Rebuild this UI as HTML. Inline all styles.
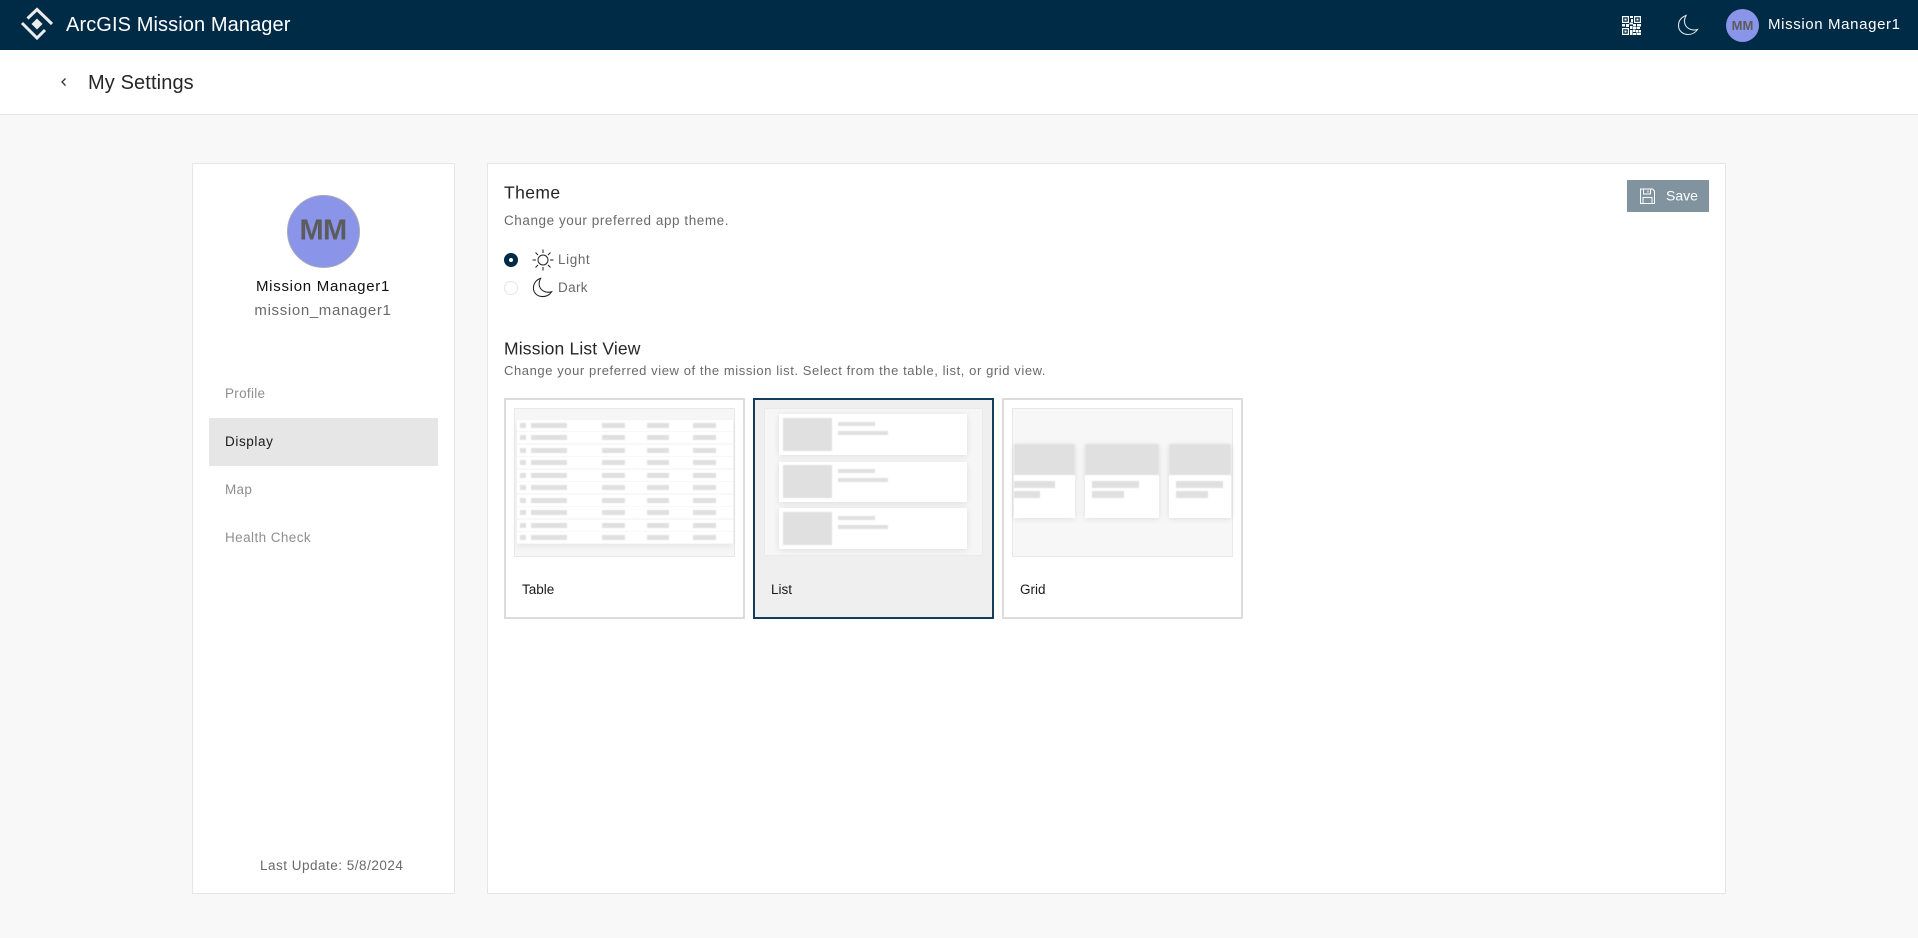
<!DOCTYPE html>
<html><head><meta charset="utf-8"><title>My Settings</title>
<style>
html,body{margin:0;padding:0;width:1918px;height:938px;overflow:hidden;background:#f8f8f8;font-family:"Liberation Sans",sans-serif}
.a{position:absolute}
.t{position:absolute;white-space:nowrap;transform:translateY(-50%);line-height:1.2}
.bar{position:absolute;background:#e0e0e0;filter:blur(.6px)}
.shadow{box-shadow:0 1px 6px rgba(0,0,0,.1)}
.n{font-size:13.5px;letter-spacing:.3px}
.r{position:absolute;left:517px;width:216px;height:11px;background:#fff}
.r i{position:absolute;top:3px;height:5px;background:#e0e0e0;filter:blur(.6px)}
.c1{left:3px;width:6px}.c2{left:14px;width:36px}.c3{left:85px;width:23px}.c4{left:130px;width:22px}.c5{left:176px;width:23px}
</style></head><body>
<div class="a" style="left:0;top:0;width:1918px;height:50px;background:#002b47"></div>
<svg class="a" style="left:14px;top:2px" width="46" height="46" viewBox="14 2 46 46" fill="none" stroke="#ececec" stroke-width="3">
<path d="M27.500 18.500 L37 9.500 L52 24"/><path d="M22 23 L37 38 L45 30"/><path d="M37 18.500 L42.500 24 L37 29.500 L31.500 24Z" fill="#ececec" stroke="none"/></svg>
<div class="t" style="left:66px;top:25px;font-size:20px;color:#fff;letter-spacing:.1px">ArcGIS Mission Manager</div>
<svg class="a" style="left:1622px;top:16px" width="19" height="19" viewBox="0 0 19 19" fill="#fff">
<path fill-rule="evenodd" d="M0 0h7v7H0zM1.200 1.200v4.600h4.600v-4.600zM12 0h7v7h-7zM13.200 1.200v4.600h4.600v-4.600zM0 12h7v7H0zM1.200 13.200v4.600h4.600v-4.600z"/>
<path d="M2.500 2.500h2v2h-2zM14.500 2.500h2v2h-2zM2.500 14.500h2v2h-2zM8 0h3v2H8zM9 3h2v3H9zM7.500 6.500h3.500v2H7.500zM0 8h3v2.500H0zM4 8h3v3H4zM11 8h3v2.500h-3zM15 8h4v2.500h-4zM8 10h2.500v3H8zM11 11h3.500v2H11zM15 11h3v2h-3zM8 14h2.500v5H8zM11 13.500h2.500v2.500H11zM14 14h2.500v2.500H14zM17 14h2v2.500h-2zM11 17h3.500v2H11zM15 17h4v2h-4z"/></svg>
<svg class="a" style="left:1677px;top:14px" width="22" height="22" viewBox="0 0 22 22" fill="none" stroke="#dfe5e9" stroke-width="1.100">
<path d="M9 1.500C4.500 3 1.500 6.700 1.500 11.500C1.500 17 6 20.500 11 20.500C15 20.500 18.500 18.500 20.500 15.500C14 17.500 8 13.500 7.500 8C7.300 5.500 8 3.500 9 1.500Z"/></svg>
<div class="a" style="left:1726px;top:9px;width:33px;height:33px;border-radius:50%;background:#8a94e8"></div>
<div class="t" style="left:1726px;width:33px;text-align:center;top:26px;font-size:13px;font-weight:bold;color:#5c5c5c">MM</div>
<div class="t" style="left:1768px;top:25px;font-size:15px;color:#fff;letter-spacing:.63px">Mission Manager1</div>

<div class="a" style="left:0;top:50px;width:1918px;height:64px;background:#fff;border-bottom:1px solid #e6e6e6"></div>
<svg class="a" style="left:58px;top:76px" width="12" height="12" viewBox="0 0 12 12" fill="none" stroke="#333" stroke-width="1.300"><path d="M7.500 2.500L4 6l3.500 3.500"/></svg>
<div class="t" style="left:88px;top:83px;font-size:20px;color:#262626;letter-spacing:.12px">My Settings</div>

<div class="a" style="left:192px;top:163px;width:261px;height:729px;background:#fff;border:1px solid #e6e6e6"></div>
<div class="a" style="left:287px;top:195px;width:71px;height:71px;border-radius:50%;background:#8a94e8;border:.5px solid #a9a9b5"></div>
<div class="t" style="left:287px;width:72px;text-align:center;top:231px;font-size:29px;font-weight:bold;color:#5c5c5c;letter-spacing:-.6px">MM</div>
<div class="t" style="left:192px;width:262px;text-align:center;top:286.500px;font-size:15px;color:#111;letter-spacing:.72px">Mission Manager1</div>
<div class="t" style="left:192px;width:262px;text-align:center;top:310.500px;font-size:15px;color:#6a6a6a;letter-spacing:.65px">mission_manager1</div>
<div class="a" style="left:209px;top:418px;width:229px;height:48px;background:#e6e6e6"></div>
<div class="t n" style="left:225px;top:393.500px;color:#8f8f8f">Profile</div>
<div class="t n" style="left:225px;top:441.500px;color:#1a1a1a;letter-spacing:.6px">Display</div>
<div class="t n" style="left:225px;top:489.500px;color:#8f8f8f">Map</div>
<div class="t n" style="left:225px;top:537.500px;color:#8f8f8f;letter-spacing:.42px">Health Check</div>
<div class="t" style="left:260px;top:866px;font-size:13.500px;color:#6a6a6a;letter-spacing:.5px">Last Update: 5/8/2024</div>

<div class="a" style="left:487px;top:163px;width:1237px;height:729px;background:#fff;border:1px solid #e6e6e6"></div>
<div class="a" style="left:1627px;top:180px;width:82px;height:32px;background:#80939f"></div>
<svg class="a" style="left:1639px;top:187px" width="17" height="18" viewBox="0 0 17 18" fill="none" stroke="#fff" stroke-width="1"><path d="M1.500 2h12l2 2v12.500h-14zM4.500 2v5h7V2M9 3.500v2M4 16.500V10.500h9v6"/></svg>
<div class="t" style="left:1666px;top:196px;font-size:14px;color:#fff">Save</div>

<div class="t" style="left:504px;top:193px;font-size:17.500px;color:#262626;letter-spacing:.4px">Theme</div>
<div class="t" style="left:504px;top:221px;font-size:13.500px;color:#6a6a6a;letter-spacing:.56px">Change your preferred app theme.</div>
<div class="a" style="left:504px;top:253px;width:14px;height:14px;border-radius:50%;background:#002b47"></div>
<div class="a" style="left:509px;top:258px;width:4px;height:4px;border-radius:50%;background:#fff"></div>
<div class="a" style="left:504px;top:281px;width:12px;height:12px;border-radius:50%;background:#fff;border:1px solid #e3e3e3"></div>
<svg class="a" style="left:532px;top:249px" width="22" height="22" viewBox="0 0 22 22" fill="none" stroke="#222" stroke-width="1">
<circle cx="11" cy="11" r="5"/><path d="M11 .5v3.500M11 18v3.500M.5 11H4M18 11h3.500M3.500 3.500L6 6M16 16l2.500 2.500M3.500 18.500L6 16M16 6l2.500-2.500"/></svg>
<svg class="a" style="left:532px;top:277px" width="21" height="21" viewBox="0 0 22 22" fill="none" stroke="#222" stroke-width="1.100">
<path d="M9 1.500C4.500 3 1.500 6.700 1.500 11.500C1.500 17 6 20.500 11 20.500C15 20.500 18.500 18.500 20.500 15.500C14 17.500 8 13.500 7.500 8C7.300 5.500 8 3.500 9 1.500Z"/></svg>
<div class="t" style="left:558px;top:260px;font-size:13.500px;color:#6a6a6a;letter-spacing:.6px">Light</div>
<div class="t" style="left:558px;top:288px;font-size:13.500px;color:#6a6a6a;letter-spacing:.35px">Dark</div>

<div class="t" style="left:504px;top:349px;font-size:17.500px;color:#262626;letter-spacing:.16px">Mission List View</div>
<div class="t" style="left:504px;top:371px;font-size:13px;color:#6a6a6a;letter-spacing:.58px">Change your preferred view of the mission list. Select from the table, list, or grid view.</div>

<!-- Table card -->
<div class="a" style="left:504px;top:398px;width:237px;height:217px;background:#fff;border:2px solid #dcdcdc"></div>
<div class="a" style="left:514px;top:408px;width:219px;height:147px;background:#f6f6f6;border:1px solid #e8e8e8"></div>
<div class="a" style="left:517px;top:420px;width:216px;height:124px;background:#f8f8f8;box-shadow:0 3px 6px rgba(0,0,0,.06)"></div>
<div class="r" style="top:420px"><i class="c1"></i><i class="c2"></i><i class="c3"></i><i class="c4"></i><i class="c5"></i></div>
<div class="r" style="top:432px"><i class="c1"></i><i class="c2"></i><i class="c3"></i><i class="c4"></i><i class="c5"></i></div>
<div class="r" style="top:445px"><i class="c1"></i><i class="c2"></i><i class="c3"></i><i class="c4"></i><i class="c5"></i></div>
<div class="r" style="top:457px"><i class="c1"></i><i class="c2"></i><i class="c3"></i><i class="c4"></i><i class="c5"></i></div>
<div class="r" style="top:470px"><i class="c1"></i><i class="c2"></i><i class="c3"></i><i class="c4"></i><i class="c5"></i></div>
<div class="r" style="top:482px"><i class="c1"></i><i class="c2"></i><i class="c3"></i><i class="c4"></i><i class="c5"></i></div>
<div class="r" style="top:495px"><i class="c1"></i><i class="c2"></i><i class="c3"></i><i class="c4"></i><i class="c5"></i></div>
<div class="r" style="top:507px"><i class="c1"></i><i class="c2"></i><i class="c3"></i><i class="c4"></i><i class="c5"></i></div>
<div class="r" style="top:520px"><i class="c1"></i><i class="c2"></i><i class="c3"></i><i class="c4"></i><i class="c5"></i></div>
<div class="r" style="top:532px"><i class="c1"></i><i class="c2"></i><i class="c3"></i><i class="c4"></i><i class="c5"></i></div>
<div class="t" style="left:522px;top:590px;font-size:13.500px;color:#1a1a1a">Table</div>

<!-- List card -->
<div class="a" style="left:753px;top:398px;width:237px;height:217px;background:#efefef;border:2px solid #133d5c"></div>
<div class="a" style="left:764px;top:408px;width:217px;height:146px;background:#f6f6f6;border:1px solid #eaeaea"></div>
<div class="a shadow" style="left:779px;top:414px;width:188px;height:41px;background:#fff"></div>
<div class="bar" style="left:783px;top:418px;width:49px;height:33px"></div><div class="bar" style="left:838px;top:422px;width:37px;height:4px"></div><div class="bar" style="left:838px;top:431px;width:50px;height:4px"></div>
<div class="a shadow" style="left:779px;top:462px;width:188px;height:40px;background:#fff"></div>
<div class="bar" style="left:783px;top:465px;width:49px;height:33px"></div><div class="bar" style="left:838px;top:469px;width:37px;height:4px"></div><div class="bar" style="left:838px;top:478px;width:50px;height:4px"></div>
<div class="a shadow" style="left:779px;top:508px;width:188px;height:41px;background:#fff"></div>
<div class="bar" style="left:783px;top:512px;width:49px;height:33px"></div><div class="bar" style="left:838px;top:516px;width:37px;height:4px"></div><div class="bar" style="left:838px;top:525px;width:50px;height:4px"></div>
<div class="t" style="left:771px;top:590px;font-size:13.500px;color:#1a1a1a">List</div>

<!-- Grid card -->
<div class="a" style="left:1002px;top:398px;width:237px;height:217px;background:#fff;border:2px solid #dcdcdc"></div>
<div class="a" style="left:1012px;top:408px;width:219px;height:147px;background:#f7f7f7;border:1px solid #e8e8e8"></div>
<div class="a shadow" style="left:1014px;top:444px;width:61px;height:74px;background:#fff"></div>
<div class="bar" style="left:1014px;top:444px;width:61px;height:31px"></div><div class="bar" style="left:1014px;top:481px;width:41px;height:7px"></div><div class="bar" style="left:1014px;top:491px;width:26px;height:7px"></div>
<div class="a shadow" style="left:1085px;top:444px;width:74px;height:74px;background:#fff"></div>
<div class="bar" style="left:1085px;top:444px;width:74px;height:31px"></div><div class="bar" style="left:1092px;top:481px;width:47px;height:7px"></div><div class="bar" style="left:1092px;top:491px;width:32px;height:7px"></div>
<div class="a shadow" style="left:1169px;top:444px;width:62px;height:74px;background:#fff"></div>
<div class="bar" style="left:1169px;top:444px;width:62px;height:31px"></div><div class="bar" style="left:1176px;top:481px;width:47px;height:7px"></div><div class="bar" style="left:1176px;top:491px;width:32px;height:7px"></div>
<div class="t" style="left:1020px;top:590px;font-size:13.500px;color:#1a1a1a">Grid</div>
</body></html>
